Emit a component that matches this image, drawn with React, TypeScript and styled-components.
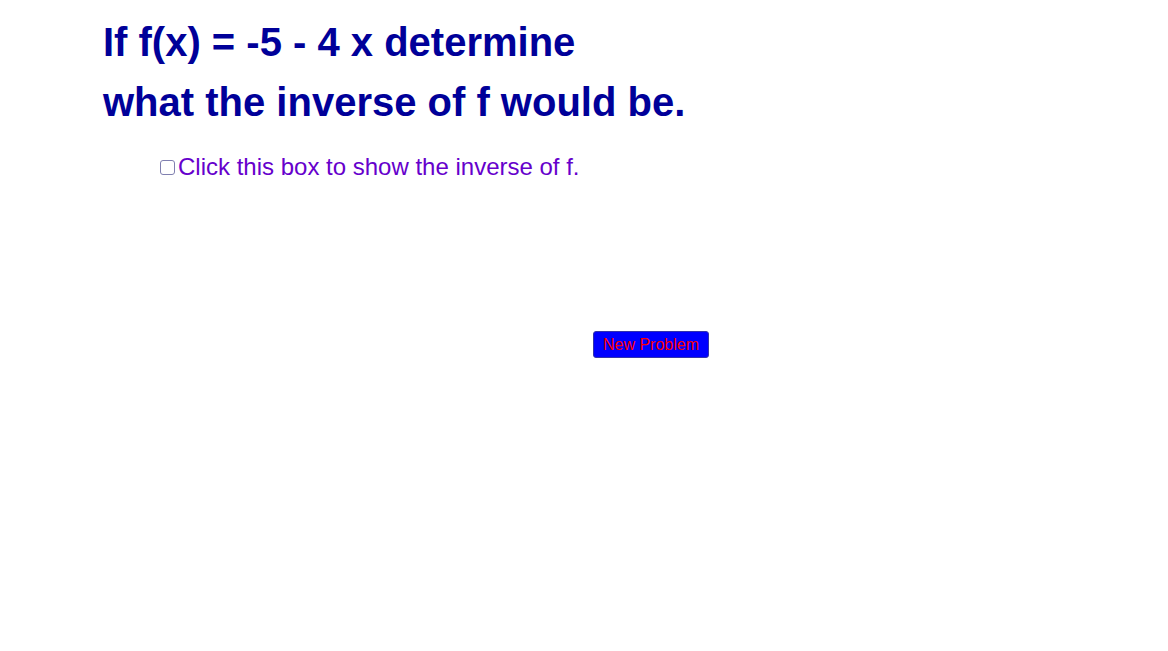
import React from "react";
import styled, {createGlobalStyle} from "styled-components";

const GlobalStyle = createGlobalStyle`
  html, body {
    margin: 0;
    padding: 0;
    background: #ffffff;
    font-family: "Liberation Sans", Arial, sans-serif;
  }
`

const App = () => {
	const [checked, setChecked] = React.useState(false);
	return (
		<Page>
			<GlobalStyle/>
			<Question>
				<QuestionLine>If f(x) = -5 - 4 x determine</QuestionLine>
				<QuestionLine>what the inverse of f would be.</QuestionLine>
			</Question>
			<CheckRow onClick={() => setChecked(!checked)}>
				<Box $checked={checked}/>
				<CheckLabel>Click this box to show the inverse of f.</CheckLabel>
			</CheckRow>
			<ButtonRow>
				<ProblemButton>New Problem</ProblemButton>
			</ButtonRow>
		</Page>
	)
}

export default App

const Page = styled.div`
  width: 1168px;
  height: 651px;
  box-sizing: border-box;
  padding-top: 12px;
  overflow: hidden;
`

const Question = styled.div`
  padding-left: 103px;
  display: flex;
  flex-direction: column;
`

const QuestionLine = styled.div`
  font-size: 40px;
  font-weight: 700;
  line-height: 60px;
  height: 60px;
  color: #000099;
  white-space: nowrap;
`

const CheckRow = styled.div`
  margin-top: 21px;
  margin-left: 160px;
  display: flex;
  align-items: center;
  gap: 3px;
  cursor: pointer;
  width: max-content;
`

const Box = styled.div<{ $checked: boolean }>`
  width: 13px;
  height: 13px;
  border: 1px solid #8080b0;
  border-radius: 3px;
  background: ${({$checked}) => $checked ? "#6666cc" : "#ffffff"};
`

const CheckLabel = styled.span`
  font-size: 24px;
  color: #6600cc;
  line-height: 28px;
  white-space: nowrap;
`

const ButtonRow = styled.div`
  margin-top: 150px;
  padding-left: 593px;
  display: flex;
`

const ProblemButton = styled.button`
  width: 116px;
  height: 27px;
  background: #0000ff;
  color: #ff0000;
  border: 1px solid #3333aa;
  border-radius: 3px;
  font-family: "Liberation Sans", Arial, sans-serif;
  font-size: 16px;
  padding: 0;
  cursor: pointer;
`
